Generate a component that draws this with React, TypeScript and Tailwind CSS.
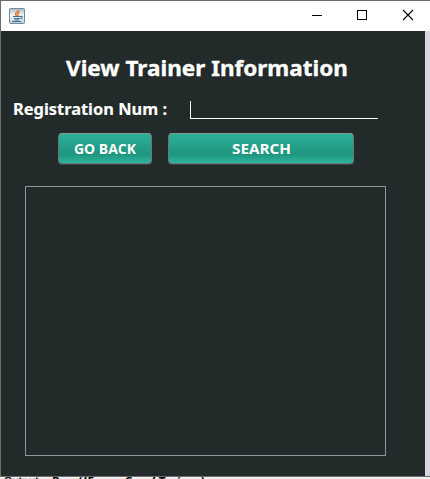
import React from "react";

function JavaIcon() {
  return (
    <svg width="16" height="16" viewBox="0 0 16 16">
      <defs>
        <linearGradient id="javaBg" x1="0" y1="0" x2="0" y2="1">
          <stop offset="0" stopColor="#a5b9c9" />
          <stop offset="0.45" stopColor="#f4f7f9" />
          <stop offset="1" stopColor="#b9c9d5" />
        </linearGradient>
      </defs>
      <rect x="0.5" y="0.5" width="15" height="15" rx="1" fill="url(#javaBg)" stroke="#70899c" />
      <path d="M9.6 2C10 4 5.8 4.4 6.6 6.4L7.8 8.3M10.4 4.4C7.8 5.2 9.8 6.4 8.6 8" fill="none" stroke="#e5701c" strokeWidth="1.4" />
      <path d="M4 8.5h7.5M5 10.5h6M11.5 8.5c2.5-.6 2 1.8 0 2.2M5.5 12h4.5M3 13.5h9" fill="none" stroke="#42708f" strokeWidth="1.1" />
    </svg>
  );
}

function TitleBar() {
  return (
    <header className="flex h-[30px] shrink-0 items-center justify-between bg-white pl-2">
      <JavaIcon />
      <svg width="120" height="30" viewBox="0 0 120 30" shapeRendering="crispEdges" fill="none" stroke="#000">
        <path d="M2 14.5h10M47.5 9.5h9v9h-9z" />
        <path d="M93 9l10 10M103 9l-10 10" strokeWidth="1.1" shapeRendering="auto" />
      </svg>
    </header>
  );
}

interface LabelProps {
  children: React.ReactNode;
  width: number;
  size: number;
  baseline: number;
  height: number;
  weight?: number;
}

function Label({ children, width, size, baseline, height, weight = 0 }: LabelProps) {
  return (
    <svg width={width} height={height} className="block overflow-visible">
      <text
        x="0"
        y={baseline}
        fontSize={size}
        textLength={width}
        lengthAdjust="spacingAndGlyphs"
        fill="currentColor"
        stroke="currentColor"
        strokeWidth={weight}
      >
        {children}
      </text>
    </svg>
  );
}

const buttonStyle =
  "flex h-[31px] items-center justify-center rounded-[4px] border border-[#68777a] border-t-[#8b9796] bg-linear-to-b from-[#2bb198] via-[#1f957f] via-70% to-[#2db69c] text-white shadow-[0_1px_0_#394342]";

export default function App() {
  return (
    <div className="flex h-[479px] w-[430px] flex-col overflow-hidden bg-[#f0f0f0] font-['Noto_Sans',sans-serif] font-bold">
      <div className="flex h-[477px] shrink-0 flex-col border-t border-b border-l border-[#6d6d6d]">
        <TitleBar />
        <div className="flex min-h-0 flex-1 bg-[#d7d7e1]">
          <main className="w-[424px] bg-[#232b2a] text-white">
            <h1 className="pt-[26px] pl-[65px]">
              <Label width={282} size={21.6} baseline={19} height={26} weight={0.35}>View Trainer Information</Label>
            </h1>
            <div className="mt-[16px] flex h-5 pl-[12px]">
              <Label width={154} size={16.4} baseline={16} height={20} weight={0.15}>Registration Num :</Label>
              <input aria-label="Registration Num" className="mt-[2px] ml-[23px] h-[18px] w-[188px] border-b border-l border-white bg-transparent outline-none" />
            </div>
            <div className="mt-[14px] flex gap-[16px] pl-[57px] font-['Open_Sans',sans-serif]">
              <button className={buttonStyle + " w-[94px]"}>
                <Label width={62} size={13.4} baseline={15} height={20}>GO BACK</Label>
              </button>
              <button className={buttonStyle + " w-[186px]"}>
                <Label width={59} size={13.4} baseline={15} height={20}>SEARCH</Label>
              </button>
            </div>
            <div className="mt-[22px] ml-[24px] h-[270px] w-[361px] border border-[#92959c]" />
          </main>
        </div>
      </div>
      <div className="flex h-[2px] gap-[7px] overflow-hidden pl-1 text-black">
        <div className="-mt-[2px] font-normal">
          <Label width={41} size={11} baseline={10} height={14} weight={0.3}>Output -</Label>
        </div>
        <div className="-mt-[2px]">
          <Label width={153} size={11} baseline={10} height={14}>Run (JFrameCoral Trainer)</Label>
        </div>
      </div>
    </div>
  );
}
